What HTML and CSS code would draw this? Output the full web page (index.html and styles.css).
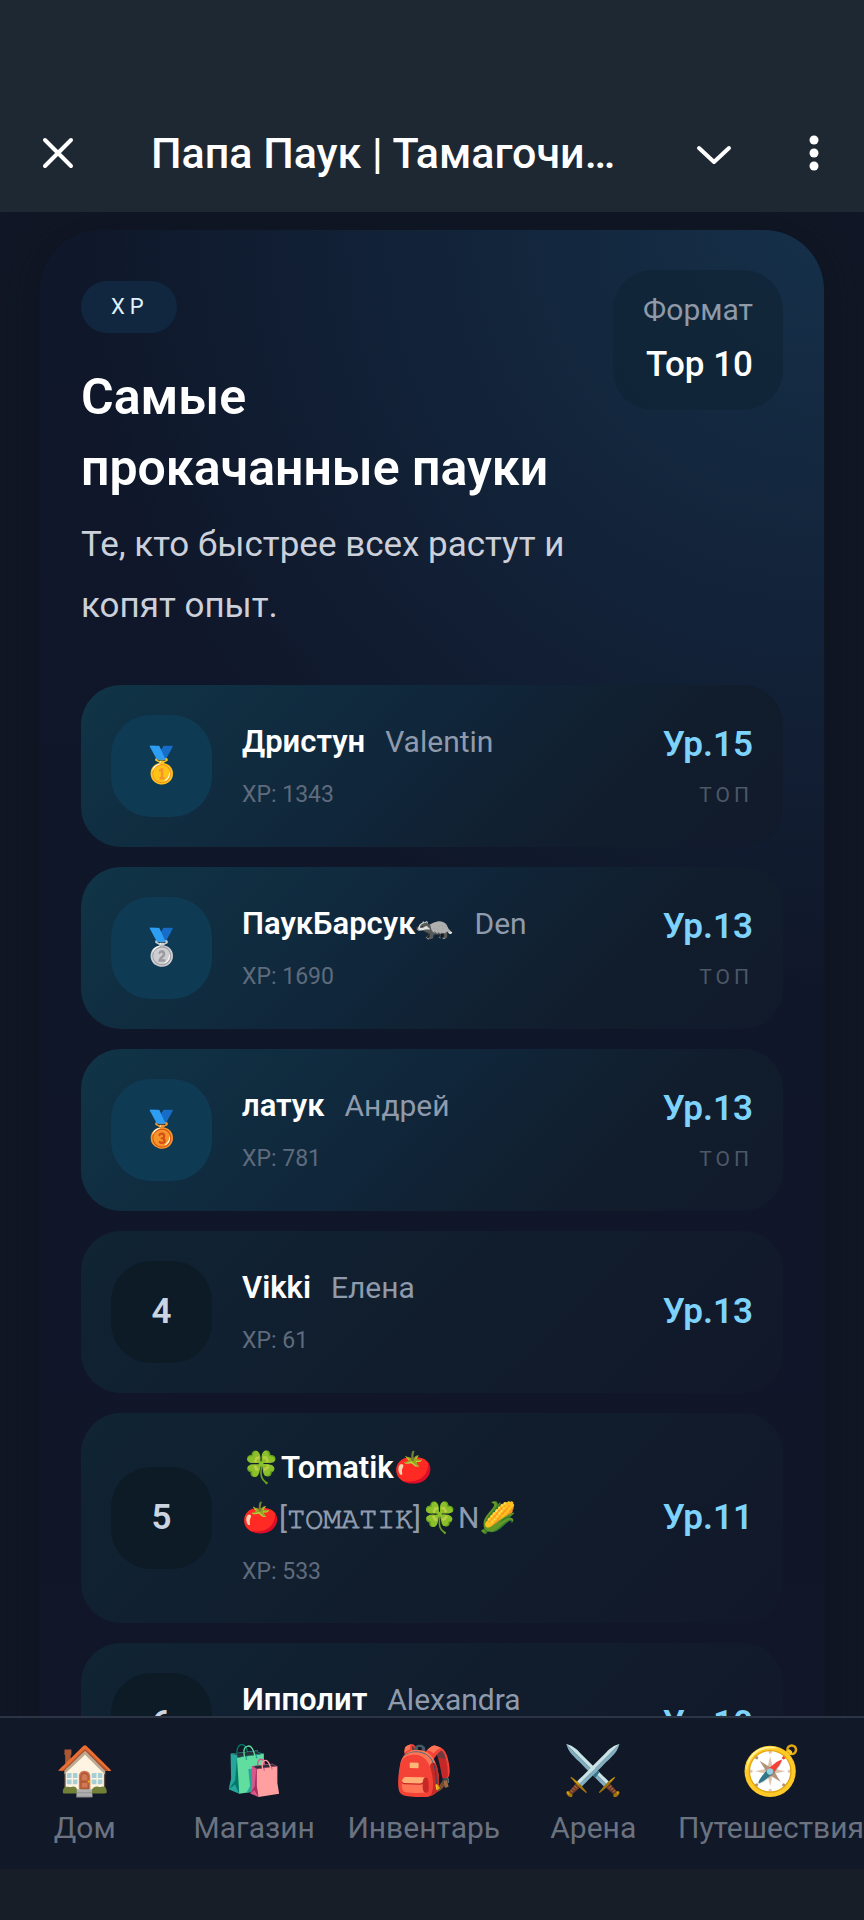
FILE: index.html
```
<!DOCTYPE html>
<html lang="ru">
<head>
<meta charset="utf-8">
<meta name="viewport" content="width=device-width, initial-scale=1">
<title>Папа Паук | Тамагочи</title>
<link rel="stylesheet" href="styles.css">
</head>
<body>
    <header class="topbar">
        <button class="icon-button" aria-label="Закрыть">
            <svg width="36" height="36" viewBox="0 0 36 36"><path d="M5 5L31 31M31 5L5 31"/></svg>
        </button>
        <span class="topbar-title">Папа Паук | Тамагочи…</span>
        <button class="icon-button" aria-label="Свернуть">
            <svg width="36" height="36" viewBox="0 0 36 36"><path d="M3 13L18 27L33 13"/></svg>
        </button>
        <button class="icon-button menu-button" aria-label="Меню">
            <svg width="36" height="36" viewBox="0 0 36 36"><g class="dots"><circle cx="18" cy="5" r="4.5"/><circle cx="18" cy="18" r="4.5"/><circle cx="18" cy="31" r="4.5"/></g></svg>
        </button>
    </header>

    <main class="page">
        <section class="board">
            <div class="board-head">
                <div class="board-intro">
                    <span class="pill">XP</span>
                    <h1>Самые прокачанные пауки</h1>
                    <p>Те, кто быстрее всех растут и копят опыт.</p>
                </div>
                <div class="format">
                    <span class="format-label">Формат</span>
                    <strong class="format-value">Top 10</strong>
                </div>
            </div>

            <ol class="rows">
                <li class="row top">
                    <span class="place">🥇</span>
                    <div class="info">
                        <div class="names"><b>Дристун</b><span class="owner">Valentin</span></div>
                        <span class="xp">XP: 1343</span>
                    </div>
                    <div class="score"><b>Ур.15</b><span>ТОП</span></div>
                </li>
                <li class="row top">
                    <span class="place">🥈</span>
                    <div class="info">
                        <div class="names"><b>ПаукБарсук🦡</b><span class="owner">Den</span></div>
                        <span class="xp">XP: 1690</span>
                    </div>
                    <div class="score"><b>Ур.13</b><span>ТОП</span></div>
                </li>
                <li class="row top">
                    <span class="place">🥉</span>
                    <div class="info">
                        <div class="names"><b>латук</b><span class="owner">Андрей</span></div>
                        <span class="xp">XP: 781</span>
                    </div>
                    <div class="score"><b>Ур.13</b><span>ТОП</span></div>
                </li>
                <li class="row">
                    <span class="place">4</span>
                    <div class="info">
                        <div class="names"><b>Vikki</b><span class="owner">Елена</span></div>
                        <span class="xp">XP: 61</span>
                    </div>
                    <div class="score"><b>Ур.13</b></div>
                </li>
                <li class="row">
                    <span class="place">5</span>
                    <div class="info">
                        <div class="names"><b>🍀Tomatik🍅</b><span class="owner">🍅[<span class="mono">𝚃𝙾𝙼𝙰𝚃𝙸𝙺</span>]🍀N🌽</span></div>
                        <span class="xp">XP: 533</span>
                    </div>
                    <div class="score"><b>Ур.11</b></div>
                </li>
                <li class="row">
                    <span class="place">6</span>
                    <div class="info">
                        <div class="names"><b>Ипполит</b><span class="owner">Alexandra</span></div>
                        <span class="xp">XP: 412</span>
                    </div>
                    <div class="score"><b>Ур.10</b></div>
                </li>
            </ol>
        </section>
    </main>

    <nav class="tabs">
        <a href="#home"><span class="tab-icon">🏠</span>Дом</a>
        <a href="#shop"><span class="tab-icon">🛍️</span>Магазин</a>
        <a href="#inventory"><span class="tab-icon">🎒</span>Инвентарь</a>
        <a href="#arena"><span class="tab-icon">⚔️</span>Арена</a>
        <a href="#travel"><span class="tab-icon">🧭</span>Путешествия</a>
    </nav>
    <div class="system-bar"></div>
</body>
</html>
```
FILE: styles.css
```
* {
    box-sizing: border-box;
}
body {
    margin: 0;
    height: 100vh;
    display: flex;
    flex-direction: column;
    background: #111827;
    color: #fff;
    font-family: Roboto, "Noto Sans", sans-serif;
    overflow: hidden;
}

/* top bar */
.topbar {
    flex: none;
    display: flex;
    align-items: center;
    padding: 94px 32px 0 40px;
    height: 212px;
    background: #1e2832;
}
.icon-button {
    display: flex;
    padding: 0;
    border: none;
    background: none;
    cursor: pointer;
}
.icon-button path {
    fill: none;
    stroke: #fff;
    stroke-width: 4;
    stroke-linecap: round;
    stroke-linejoin: round;
}
.dots {
    fill: #fff;
}
.topbar-title {
    flex: 1;
    margin: 0 20px 0 75px;
    font-size: 43px;
    line-height: 50px;
    font-weight: 500;
    white-space: nowrap;
}
.menu-button {
    margin-left: 64px;
}

/* leaderboard card */
.page {
    flex: 1;
    min-height: 0;
    padding: 18px 40px 0;
    background: #111726;
    overflow-y: auto;
    scrollbar-width: none;
}
.board {
    padding: 40px 41px;
    border-radius: 60px;
    background:
        radial-gradient(circle at top right, rgba(56, 189, 248, 0.15), transparent 760px),
        linear-gradient(180deg, #0f172a, #111628);
    box-shadow: 0 0 50px rgba(12, 18, 26, 0.6);
}
.board-head {
    display: flex;
    justify-content: space-between;
    align-items: flex-start;
    gap: 40px;
}
.board-intro {
    flex: 1;
    padding-top: 11px;
}
.pill {
    display: inline-block;
    padding: 0 28px 0 30px;
    border-radius: 26px;
    background: #10273f;
    color: #e0f2fe;
    font-size: 22px;
    line-height: 52px;
    letter-spacing: 5px;
}
h1 {
    margin: 29px 0 0;
    font-size: 50px;
    line-height: 71px;
    font-weight: 600;
}
p {
    margin: 10px 0 0;
    color: #cbd0da;
    font-size: 35px;
    line-height: 61px;
}
.format {
    display: flex;
    flex-direction: column;
    padding: 15px 30px;
    border-radius: 40px;
    background: rgba(15, 35, 52, 0.7);
    text-align: right;
}
.format-label {
    color: #8f99a8;
    font-size: 30px;
    line-height: 50px;
}
.format-value {
    font-size: 35px;
    line-height: 60px;
    font-weight: 500;
}

/* rows */
.rows {
    display: flex;
    flex-direction: column;
    gap: 20px;
    margin: 49px 0 0;
    padding: 0;
    list-style: none;
}
.row {
    display: flex;
    align-items: center;
    gap: 30px;
    padding: 30px;
    border-radius: 40px;
    background: linear-gradient(135deg, #102434, #111c2c 60%, #111829);
}
.row.top {
    background: linear-gradient(135deg, #103447, #10263a 45%, #111d2c 75%, #111a2b);
}
.place {
    flex: none;
    width: 101px;
    height: 102px;
    border-radius: 40px;
    background: #0d1b27;
    color: #cbd5e1;
    font-size: 35px;
    font-weight: 600;
    line-height: 102px;
    text-align: center;
}
.top .place {
    background: #0f3a53;
}
.info {
    flex: 1;
}
.names {
    display: flex;
    flex-wrap: wrap;
    align-items: baseline;
    column-gap: 20px;
    margin-bottom: 6px;
    font-size: 30px;
    line-height: 50px;
}
.names b {
    font-size: 31px;
    font-weight: 600;
}
.owner {
    color: #8f9bac;
}
.mono {
    font-size: 26px;
    font-weight: 600;
}
.xp {
    display: block;
    color: #5f6b7d;
    font-size: 23px;
    line-height: 43px;
}
.score {
    text-align: right;
}
.score b {
    display: block;
    color: #7dd3fc;
    font-size: 35px;
    line-height: 52px;
    font-weight: 600;
}
.score span {
    display: block;
    margin-top: 6px;
    color: #4d5866;
    font-size: 21px;
    line-height: 36px;
    letter-spacing: 4px;
}

/* bottom tabs */
.tabs {
    flex: none;
    display: flex;
    padding: 20px 0;
    height: 153px;
    border-top: 2px solid #2b3545;
    background: #111827;
}
.tabs a {
    flex: 1;
    display: flex;
    flex-direction: column;
    align-items: center;
    color: #6b7280;
    font-size: 30px;
    line-height: 40px;
    text-decoration: none;
}
.tab-icon {
    margin-bottom: 4px;
    font-size: 48px;
    line-height: 66px;
}
.system-bar {
    flex: none;
    height: 51px;
    background: #171e27;
}
```
